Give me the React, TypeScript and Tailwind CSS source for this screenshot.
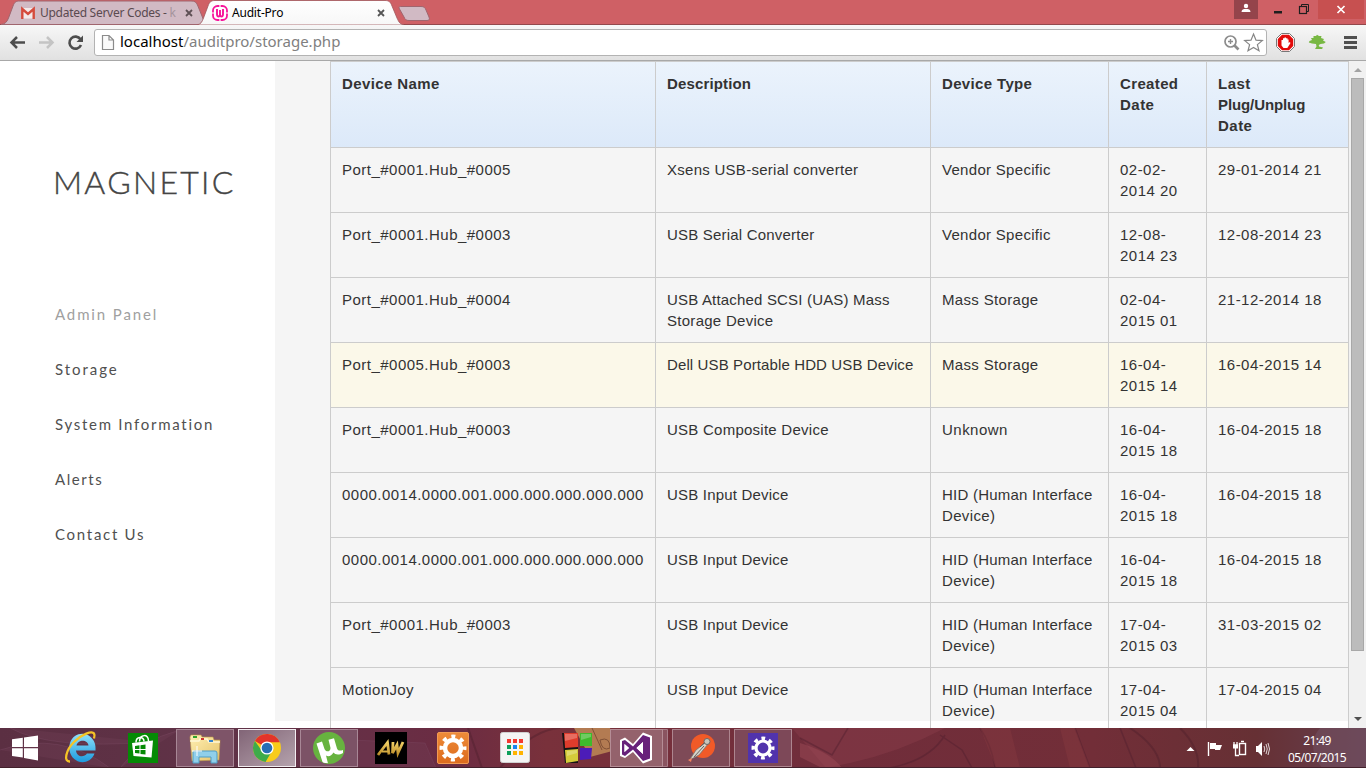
import React from "react";

const UI = "font-['Noto_Sans',sans-serif]";

const rows: string[][] = [
  ["Port_#0001.Hub_#0005", "Xsens USB-serial converter", "Vendor Specific", "02-02-|2014 20", "29-01-2014 21"],
  ["Port_#0001.Hub_#0003", "USB Serial Converter", "Vendor Specific", "12-08-|2014 23", "12-08-2014 23"],
  ["Port_#0001.Hub_#0004", "USB Attached SCSI (UAS) Mass|Storage Device", "Mass Storage", "02-04-|2015 01", "21-12-2014 18"],
  ["Port_#0005.Hub_#0003", "Dell USB Portable HDD USB Device", "Mass Storage", "16-04-|2015 14", "16-04-2015 14"],
  ["Port_#0001.Hub_#0003", "USB Composite Device", "Unknown", "16-04-|2015 18", "16-04-2015 18"],
  ["0000.0014.0000.001.000.000.000.000.000", "USB Input Device", "HID (Human Interface|Device)", "16-04-|2015 18", "16-04-2015 18"],
  ["0000.0014.0000.001.000.000.000.000.000", "USB Input Device", "HID (Human Interface|Device)", "16-04-|2015 18", "16-04-2015 18"],
  ["Port_#0001.Hub_#0003", "USB Input Device", "HID (Human Interface|Device)", "17-04-|2015 03", "31-03-2015 02"],
  ["MotionJoy", "USB Input Device", "HID (Human Interface|Device)", "17-04-|2015 04", "17-04-2015 04"],
];
const heads = ["Device Name", "Description", "Device Type", "Created|Date", "Last|Plug/Unplug|Date"];

const tracking: Record<string, string> = {
  "Xsens USB-serial converter": "tracking-[0.27px]",
  "USB Serial Converter": "tracking-[0.2px]",
  "USB Attached SCSI (UAS) Mass": "tracking-[0.18px]",
  "Storage Device": "tracking-[0.28px]",
  "Dell USB Portable HDD USB Device": "tracking-[0.12px]",
  "USB Composite Device": "tracking-[0.25px]",
  "USB Input Device": "tracking-[0.2px]",
  "Vendor Specific": "tracking-[0.3px]",
  "Mass Storage": "tracking-[0.33px]",
  "HID (Human Interface": "tracking-[0.23px]",
  "Device)": "tracking-[0.35px]",
  MotionJoy: "tracking-[0.4px]",
  "Device Name": "tracking-[0.4px]",
  Description: "tracking-[0.14px]",
  "Device Type": "tracking-[0.35px]",
  Created: "tracking-[0.36px]",
  "Plug/Unplug": "tracking-[-0.1px]",
};

function Lines({ text }: { text: string }) {
  return (
    <>
      {text.split("|").map((l) => (
        <div key={l} className={`whitespace-nowrap ${tracking[l] ?? "tracking-[0.48px]"}`}>{l}</div>
      ))}
    </>
  );
}

function TabStrip() {
  return (
    <div className="relative h-[25px] w-full bg-[#cf6065]">
      <svg className="absolute inset-0" width="1366" height="25" viewBox="0 0 1366 25">
        <defs>
          <linearGradient id="tab" x1="0" y1="0" x2="0" y2="1">
            <stop offset="0" stopColor="#ffffff" />
            <stop offset="1" stopColor="#f7f7f7" />
          </linearGradient>
        </defs>
        <path d="M0 24.5H1366" stroke="#93484c" />
        <path d="M1 24.5C5 24 7 22 8.5 18L13 6C14.500 2 16 1 20 1H191C195 1 196 2 197.500 5L204 21L200 24.500Z" fill="#d1bac4" stroke="#a0656e" />
        <path d="M197 25C201 24 202 22 203.500 18L208 6C209.500 2 211 .5 215 .5H385C389 .5 390.500 2 392 6L397 18C399 22.500 400 24 404 25Z" fill="url(#tab)" stroke="#a0565b" strokeWidth=".8" />
        <path d="M400.500 6.500H421C424 6.500 425 7.500 426 10L429 17C430 19.500 429 20.500 427 20.500H409C406 20.500 405 19.500 404 17L399.500 9C398.500 7.500 399 6.500 400.500 6.500Z" fill="#d1bac4" stroke="#a0656e" />
        <rect x="22" y="8" width="12" height="10.500" fill="#f3e9e9" />
        <path d="M22.300 19V9L28 14L33.700 9V19" fill="none" stroke="#d54b3d" strokeWidth="2.400" />
        <path d="M186 10L192 16M192 10L186 16" stroke="#5e5055" strokeWidth="1.800" />
        <path d="M378 10L384 16M384 10L378 16" stroke="#555" strokeWidth="1.800" />
        <rect x="213" y="6" width="14" height="14" rx="4.500" fill="#fff" stroke="#f7139a" strokeWidth="1.800" />
        <path d="M217 9V14Q217 16.500 218.500 16.500Q220 16.500 220 14V10V14Q220 16.500 221.500 16.500Q223 16.500 223 14V9" fill="none" stroke="#f7139a" strokeWidth="1.900" />
        <path d="M220 5V7M220 19V21M212 13H214M226 13H228" stroke="#fff" strokeWidth="1.200" />
        <rect x="1234" y="0" width="24" height="19" fill="#94444b" />
        <circle cx="1246" cy="6" r="2.200" fill="#fff" />
        <path d="M1241.500 12C1241.500 9.500 1243.500 9 1246 9S1250.500 9.500 1250.500 12Z" fill="#fff" />
        <rect x="1274" y="11" width="8" height="2.500" fill="#1e1e1e" />
        <path d="M1301.500 6V4.500H1308.500V11.500H1307" fill="none" stroke="#1e1e1e" />
        <rect x="1299.500" y="6.500" width="7" height="7" fill="none" stroke="#1e1e1e" strokeWidth="1.200" />
        <rect x="1318" y="0" width="46" height="19" fill="#c75050" />
        <path d="M1337.500 6L1344.500 13M1344.500 6L1337.500 13" stroke="#fff" strokeWidth="1.700" />
      </svg>
      <div className={`absolute left-[40px] top-[4px] whitespace-nowrap text-[12px] leading-[18px] tracking-[-0.28px] text-[#5a4a50] ${UI}`}>
        Updated Server Codes - <span className="text-[#a5949c]">k</span>
      </div>
      <div className={`absolute left-[232px] top-[4px] text-[12px] leading-[18px] tracking-[-0.2px] text-black ${UI}`}>Audit-Pro</div>
    </div>
  );
}

function Toolbar() {
  return (
    <div className="flex h-[36px] w-full items-start border-b border-[#a8a8a8] bg-gradient-to-b from-[#f7f7f7] to-[#e1e1e1]">
      <svg width="94" height="35" viewBox="0 25 94 35" className="shrink-0">
        <path d="M25 42.500H11.500M17 37L11.500 42.500L17 48" fill="none" stroke="#4d4d4d" strokeWidth="2.500" />
        <path d="M39 42.500H52.500M47 37L52.500 42.500L47 48" fill="none" stroke="#c4c4c4" strokeWidth="2.500" />
        <path d="M80.500 39.300A6 6 0 1 0 81 45" fill="none" stroke="#4d4d4d" strokeWidth="2.600" />
        <path d="M83 35.500V42H76.500Z" fill="#4d4d4d" />
      </svg>
      <div className="mt-[4px] flex h-[27px] w-[1173px] items-center rounded-[3px] border border-[#b3b3b3] bg-white">
        <svg width="25" height="25" viewBox="95 30 25 25" className="shrink-0">
          <path d="M102.500 35.500H109L113.500 40V49.500H102.500ZM109 35.500V40H113.500" fill="#fafafa" stroke="#8b8b8b" strokeWidth="1.200" />
        </svg>
        <div className={`pb-[2px] text-[15px] leading-[23px] text-[#808080] ${UI}`}>
          <span className="text-black">localhost</span>/auditpro/storage.php
        </div>
        <svg width="46" height="25" viewBox="1220 30 46 25" className="ml-auto shrink-0">
          <circle cx="1230.500" cy="41.500" r="5.500" fill="#fff" stroke="#8c8c8c" strokeWidth="1.700" />
          <path d="M1228 41.500H1233M1230.500 39V44" stroke="#8c8c8c" strokeWidth="1.400" />
          <path d="M1234.500 45.500L1238.500 49.500" stroke="#8c8c8c" strokeWidth="2.600" />
          <path d="M1253.500 34L1256 40.200L1262.300 40.600L1257.400 44.600L1259 50.800L1253.500 47.400L1248 50.800L1249.600 44.600L1244.700 40.600L1251 40.200Z" fill="#fff" stroke="#858585" strokeWidth="1.200" />
        </svg>
      </div>
      <svg width="99" height="35" viewBox="1267 25 99 35" className="shrink-0">
        <path d="M1281.500 33.500H1289.500L1294.500 38.500V46.500L1289.500 51.500H1281.500L1276.500 46.500V38.500Z" fill="#fff" stroke="#777" />
        <path d="M1282 34.800H1289L1293.200 39V46L1289 50.200H1282L1277.800 46V39Z" fill="#e30b0b" />
        <path d="M1281.500 43V40H1283V38.300H1284.500V37.500H1286V38.300H1287.500V39.500H1288.600V43L1289.800 42L1290.500 43L1288.300 46.500L1287.300 48H1283.500L1281.500 45.500Z" fill="#fff" />
        <path d="M1308.800 42.500L1309.500 41L1312 40L1311 38L1313.500 38L1313.500 36L1316 36L1317 34.700L1319 36L1321.500 36L1321 38L1324 39L1323 40.500L1325.800 42L1324 43.500L1320.500 44L1318.800 45L1319 46.500L1323 47.500L1322 49H1315L1316.500 46.500L1316 44L1312 43.500Z" fill="#78b843" />
        <path d="M1344 37.500H1357M1344 42.500H1357M1344 47.500H1357" stroke="#505050" strokeWidth="3" />
      </svg>
    </div>
  );
}

function Sidebar() {
  const items: [string, string][] = [
    ["Admin Panel", "tracking-[1.87px] text-[#a0a0a0]"],
    ["Storage", "tracking-[1.95px] text-[#505050]"],
    ["System Information", "tracking-[1.72px] text-[#505050]"],
    ["Alerts", "tracking-[1.55px] text-[#505050]"],
    ["Contact Us", "tracking-[1.72px] text-[#505050]"],
  ];
  return (
    <aside className="h-full w-[275px] shrink-0 bg-white pl-[55px] font-['Lato',sans-serif]">
      <div className="-ml-[2px] pt-[100px] text-[32px] font-light leading-[42px] tracking-[2.3px] text-[#444] [-webkit-text-stroke:0.4px_#444]">MAGNETIC</div>
      <nav className="mt-[84px]">
        {items.map(([t, c]) => (
          <div key={t} className={`h-[55px] whitespace-nowrap text-[15px] leading-[55px] ${c}`}>{t}</div>
        ))}
      </nav>
    </aside>
  );
}

function DeviceTable() {
  return (
    <table className="w-[1019px] table-fixed border-collapse text-[15px] leading-[21px] text-[#333] font-['Liberation_Sans',Arial,sans-serif]">
      <colgroup>
        <col className="w-[325px]" />
        <col className="w-[275px]" />
        <col className="w-[178px]" />
        <col className="w-[98px]" />
        <col className="w-[142px]" />
      </colgroup>
      <thead>
        <tr className="h-[86px] bg-gradient-to-b from-[#ebf3fc] to-[#dce9f9]">
          {heads.map((h) => (
            <th key={h} className="border border-[#ccc] px-[11px] py-[11px] text-left align-top font-bold"><Lines text={h} /></th>
          ))}
        </tr>
      </thead>
      <tbody>
        {rows.map((r, i) => (
          <tr key={i} className={i === 3 ? "h-[65px] bg-[#fbf8e9]" : "h-[65px]"}>
            {r.map((c, j) => (
              <td key={j} className="border border-[#ccc] px-[11px] py-[11px] align-top"><Lines text={c} /></td>
            ))}
          </tr>
        ))}
      </tbody>
    </table>
  );
}

function Scrollbar() {
  return (
    <div className="flex h-full w-[17px] shrink-0 flex-col items-center bg-[#f1f1f1]">
      <svg width="17" height="17" viewBox="0 0 17 17"><path d="M5 11L9 7L13 11Z" fill="#a3a3a3" /></svg>
      <div className="h-[573px] w-[13px] border border-[#a8a8a8] bg-[#bcbcbc]" />
      <svg width="17" height="17" viewBox="0 0 17 17" className="mt-auto"><path d="M5 6L9 10L13 6Z" fill="#505050" /></svg>
    </div>
  );
}

function Taskbar() {
  return (
    <footer className="relative h-[40px] w-full overflow-hidden bg-[#6b2c3a]">
      <svg width="1366" height="40" viewBox="0 728 1366 40">
        <defs>
          <linearGradient id="wall" x1="0" x2="1" y1="0" y2="0">
            <stop offset="0" stopColor="#5b2f42" />
            <stop offset=".18" stopColor="#613348" />
            <stop offset=".33" stopColor="#6b2c43" />
            <stop offset=".4" stopColor="#79313b" />
            <stop offset=".6" stopColor="#702d3b" />
            <stop offset=".8" stopColor="#722e38" />
            <stop offset=".92" stopColor="#663034" />
            <stop offset="1" stopColor="#664050" />
          </linearGradient>
          <linearGradient id="chromeBtn" x1="0" x2="1" y1="0" y2="1">
            <stop offset="0" stopColor="#816476" />
            <stop offset="1" stopColor="#b5a3ad" />
          </linearGradient>
          <linearGradient id="ie" x1="0" x2="0" y1="0" y2="1">
            <stop offset="0" stopColor="#8fe0fb" />
            <stop offset="1" stopColor="#1c9bdf" />
          </linearGradient>
          <linearGradient id="folder" x1="0" x2="1" y1="0" y2="1">
            <stop offset="0" stopColor="#fff0b4" />
            <stop offset="1" stopColor="#e6c36a" />
          </linearGradient>
          <linearGradient id="orange" x1="0" x2="0" y1="0" y2="1">
            <stop offset="0" stopColor="#ee8b39" />
            <stop offset="1" stopColor="#dc6b1d" />
          </linearGradient>
          <linearGradient id="gold" x1="0" x2="0" y1="0" y2="1">
            <stop offset="0" stopColor="#f3d267" />
            <stop offset="1" stopColor="#b98b28" />
          </linearGradient>
          <clipPath id="disc"><circle cx="329" cy="748" r="15.500" /></clipPath>
        </defs>
        <rect x="0" y="728" width="1366" height="40" fill="url(#wall)" />
        <path d="M0 750Q60 730 110 768M120 768Q140 740 180 730M10 728Q50 750 150 742M350 740L425 743L436 768H358Z" fill="#74415a" fillOpacity=".3" stroke="#82516a" strokeOpacity=".3" />
        <path d="M792 728H945Q900 752 850 763L826 768Z" fill="#93424f" fillOpacity=".35" />
        <path d="M800 743Q830 752 842 768H822L800 757Z" fill="#9b4a55" fillOpacity=".5" />
        <path d="M848 728L832 755L800 738M890 768Q930 760 945 735M940 735L962 750L972 768M980 728Q992 746 995 768M1075 728L1090 768M1120 728L1136 768" fill="none" stroke="#4f202e" strokeOpacity=".45" strokeWidth="1.500" />
        <path d="M980 728H1010L1020 768H996ZM1060 728H1075L1090 768H1070Z" fill="#8c3c42" fillOpacity=".35" />
        <path d="M468 728L482 768M500 768Q530 730 560 728M1130 728Q1160 748 1160 768M1180 728Q1200 748 1198 768" fill="none" stroke="#4b1e2a" strokeOpacity=".4" strokeWidth="2" />
        <path d="M1320 728Q1305 745 1322 768H1366V728Z" fill="#735366" fillOpacity=".5" />
        <path d="M574 728H610L616 750L590 757Z" fill="#b37b52" />
        <path d="M592 728L602 750M600 740Q610 736 610 748Q602 752 600 740" fill="none" stroke="#805036" />
        <rect x="0" y="767" width="1366" height="1" fill="#42202b" />

        <path d="M12 739.200L22.800 737.700V747H12ZM24 737.500L38 735.500V747H24ZM12 748.200H22.800V757.500L12 756ZM24 748.200H38V760.500L24 758Z" fill="#fff" />

        <path d="M95.500 750.500H76C76.500 757 84 758 87 753.500H94.500C91 763 81 763.500 76.500 760.500C70 757 68 749 70 743C73 733.500 84 731.500 90 736.500C94.500 740 96 745 95.500 750.500ZM76.500 745.500H88.500C88 739 77.500 739 76.500 745.500Z" fill="url(#ie)" />
        <path d="M70 761.500C63 762 66 750 74 742C82 734 92 730.500 94 733.500C95 735 94.500 737 94 738.500" fill="none" stroke="#f6c426" strokeWidth="2.300" />

        <rect x="128" y="733" width="30" height="30" fill="#058a05" />
        <path d="M132 743L153 740.500L151.500 757.500L133.500 756Z" fill="#fff" />
        <path d="M136 742.500C136 736 144 736 144 741.500M139.500 741.500C140 734 148.500 733.500 148.500 741" fill="none" stroke="#fff" strokeWidth="1.500" />
        <path d="M135 746L139.500 745.300V749H135ZM140.500 745.200L145.500 744.500V749H140.500ZM135 750H139.500V753.500L135 753ZM140.500 750H145.500V754.500L140.500 754Z" fill="#058a05" />

        <rect x="176.500" y="729.500" width="57" height="37" fill="#7e5468" stroke="#a88796" />
        <path d="M190 737L191 735H201L202 737H213L214 740H220L219 760L192 761Z" fill="url(#folder)" stroke="#bd9948" strokeWidth=".6" />
        <path d="M190 741H199L200 739H207L209 742H220" fill="none" stroke="#fff7d6" strokeWidth="1.500" />
        <rect x="193" y="736" width="4" height="2" fill="#32a52c" /><rect x="201" y="738" width="3" height="2" fill="#cf392f" /><rect x="209" y="740" width="4" height="2" fill="#3584ce" />
        <path d="M193 763V752Q193 751 195 751H215Q217 751 217 753V763H211V757H199V763Z" fill="#90cfea" stroke="#4f9dc6" />
        <path d="M192 751H202M197 746V756" stroke="#fff" strokeWidth="1" />

        <rect x="238.500" y="729.500" width="57" height="37" fill="url(#chromeBtn)" stroke="#f3edf1" />
        <circle cx="267" cy="748" r="14" fill="#f8cc1b" />
        <path d="M267 748L254.900 741A14 14 0 0 1 279.800 742.300L267 742.300Z" fill="#e3342a" />
        <path d="M254.900 741A14 14 0 0 0 265.500 762L272 751L262 751Z" fill="#3eab4a" />
        <circle cx="267" cy="748" r="6.600" fill="#fff" /><circle cx="267" cy="748" r="5.300" fill="#286eb5" />

        <rect x="300.500" y="729.500" width="57" height="37" fill="#7c5266" stroke="#a88796" />
        <circle cx="329" cy="748" r="16" fill="#67b33f" />
        <path clipPath="url(#disc)" d="M316.500 743.500L322 741.500L324.500 749C326 752.500 330.500 752 330.500 748L328.500 739.800L334 738.300L337 748.500C338 751 340.500 751 343 750V753C338.500 755.500 335 754.500 333.500 752.500C331.500 756 328.500 757 326 755.500L328 763.500H323Z" fill="#fff" />

        <rect x="375" y="732" width="32" height="32" fill="#000" />
        <path d="M378 755L387.500 742.500L389 754.500M393 742L392.500 753L397 745L398 753L403 742" fill="none" stroke="url(#gold)" strokeWidth="2.800" />
        <path d="M382 751.500H389" stroke="#d4ac42" strokeWidth="2" />

        <rect x="437.500" y="732.500" width="31" height="31" rx="1.500" fill="url(#orange)" stroke="#f19a53" />
        <circle cx="453" cy="748" r="11.500" fill="none" stroke="#fff" strokeWidth="4" strokeDasharray="4 5.030" strokeDashoffset="2" />
        <circle cx="453" cy="748" r="8" fill="none" stroke="#fff" strokeWidth="4.500" />

        <rect x="500.500" y="732.500" width="29" height="30" rx="2" fill="#f4f4f4" stroke="#d0d0d0" />
        <path d="M507 739H511V743H507ZM513 739H517V743H513ZM519 739H523V743H519Z" fill="#f4382f" />
        <path d="M507 745H511V749H507ZM507 751H511V755H507Z" fill="#0c9f5b" /><rect x="513" y="745" width="4" height="4" fill="#1684f0" />
        <path d="M519 745H523V749H519ZM513 751H517V755H513ZM519 751H523V755H519Z" fill="#ffb300" />

        <path d="M562 733L578 733V763L565 763Z" fill="#141414" />
        <path d="M564 733H578V747L565 748Z" fill="#df3c2c" /><path d="M580 733H592V746H580Z" fill="#3fba2c" />
        <path d="M565 750L578 749V761L566 763Z" fill="#d5cb3a" /><path d="M580 748H592L591 759L580 760Z" fill="#4c1cb8" />
        <path d="M565 734H577V738L565 741ZM581 734H591V737L581 740ZM567 751L577 750V753L567 756Z" fill="#fff" fillOpacity=".25" />

        <rect x="610.500" y="729.500" width="52" height="37" fill="#94626c" stroke="#b58d96" />
        <path d="M663 729.500H667.500V766.500H663" fill="#8a5460" stroke="#a77d88" />
        <path d="M620 740L625 737.500L633 744L643 732.500L652 736V760L643 763.500L633 752L625 758L620 756Z" fill="#fff" />
        <path d="M622 741L625 740L633 746.500L643 735L650 737.500V758.500L643 761L633 749.500L625 756L622 754.500ZM624.500 744V752L629 748ZM643 742L636.500 748L643 754Z" fill="#68217a" fillRule="evenodd" />
        <path d="M624.500 744V752L629 748ZM643 742L636.500 748L643 754Z" fill="#fff" />

        <rect x="672.500" y="729.500" width="57" height="37" fill="#7e4a57" stroke="#ad858f" />
        <circle cx="703" cy="746" r="12" fill="#f15a28" />
        <path d="M705 743L696 750L689.500 760L699 755L708 744Z" fill="#d8d5ca" stroke="#77716d" strokeWidth=".8" />
        <circle cx="707" cy="741.500" r="3" fill="#c8c5bc" stroke="#6a6865" />
        <path d="M694 757L704 746M700 747L704 743" stroke="#66615f" /><path d="M688 760L692 758L691 762Z" fill="#f4835f" />

        <rect x="734.500" y="729.500" width="57" height="37" fill="#7d4858" stroke="#ad858f" />
        <rect x="748" y="733" width="30" height="30" fill="#5133ac" />
        <circle cx="763" cy="748" r="9.800" fill="none" stroke="#fff" strokeWidth="3.400" strokeDasharray="3.800 3.897" strokeDashoffset="1.900" />
        <circle cx="763" cy="748" r="7" fill="none" stroke="#fff" strokeWidth="3.200" />

        <path d="M1186.500 751L1190.500 747L1194.500 751Z" fill="#fff" />
        <path d="M1208.500 742V756" stroke="#fff" strokeWidth="1.400" /><path d="M1210 743H1216V745H1222L1220 750H1215V749H1210Z" fill="#fff" />
        <rect x="1239.500" y="743.500" width="6" height="11" fill="none" stroke="#fff" strokeWidth="1.400" /><path d="M1241 741.500H1244M1233 745H1238M1235.500 748V755.500H1239M1234 742V745M1237 742V745" fill="none" stroke="#fff" strokeWidth="1.300" /><rect x="1233" y="745" width="5" height="3.500" fill="#fff" />
        <path d="M1256 746H1258L1262 742V756L1258 752H1256Z" fill="#fff" /><path d="M1264 746Q1265.500 749 1264 752M1266 744Q1268.500 749 1266 754M1268 743Q1271 749 1268 755" fill="none" stroke="#fff" strokeWidth=".8" />
      </svg>
      <div className={`absolute right-[19px] top-[4px] w-[60px] text-center text-[12px] leading-[17px] tracking-[-0.6px] text-white ${UI}`}>
        <div>21:49</div>
        <div className="whitespace-nowrap">05/07/2015</div>
      </div>
    </footer>
  );
}

export default function App() {
  return (
    <div className="flex h-[768px] w-[1366px] flex-col overflow-hidden bg-white">
      <TabStrip />
      <Toolbar />
      <div className="flex h-[667px] w-full overflow-hidden">
        <Sidebar />
        <main className="h-full w-[1074px] shrink-0 overflow-hidden bg-[linear-gradient(#f5f5f5,#f5f5f5)] bg-[length:100%_660px] bg-no-repeat pl-[55px]">
          <DeviceTable />
        </main>
        <Scrollbar />
      </div>
      <Taskbar />
    </div>
  );
}
